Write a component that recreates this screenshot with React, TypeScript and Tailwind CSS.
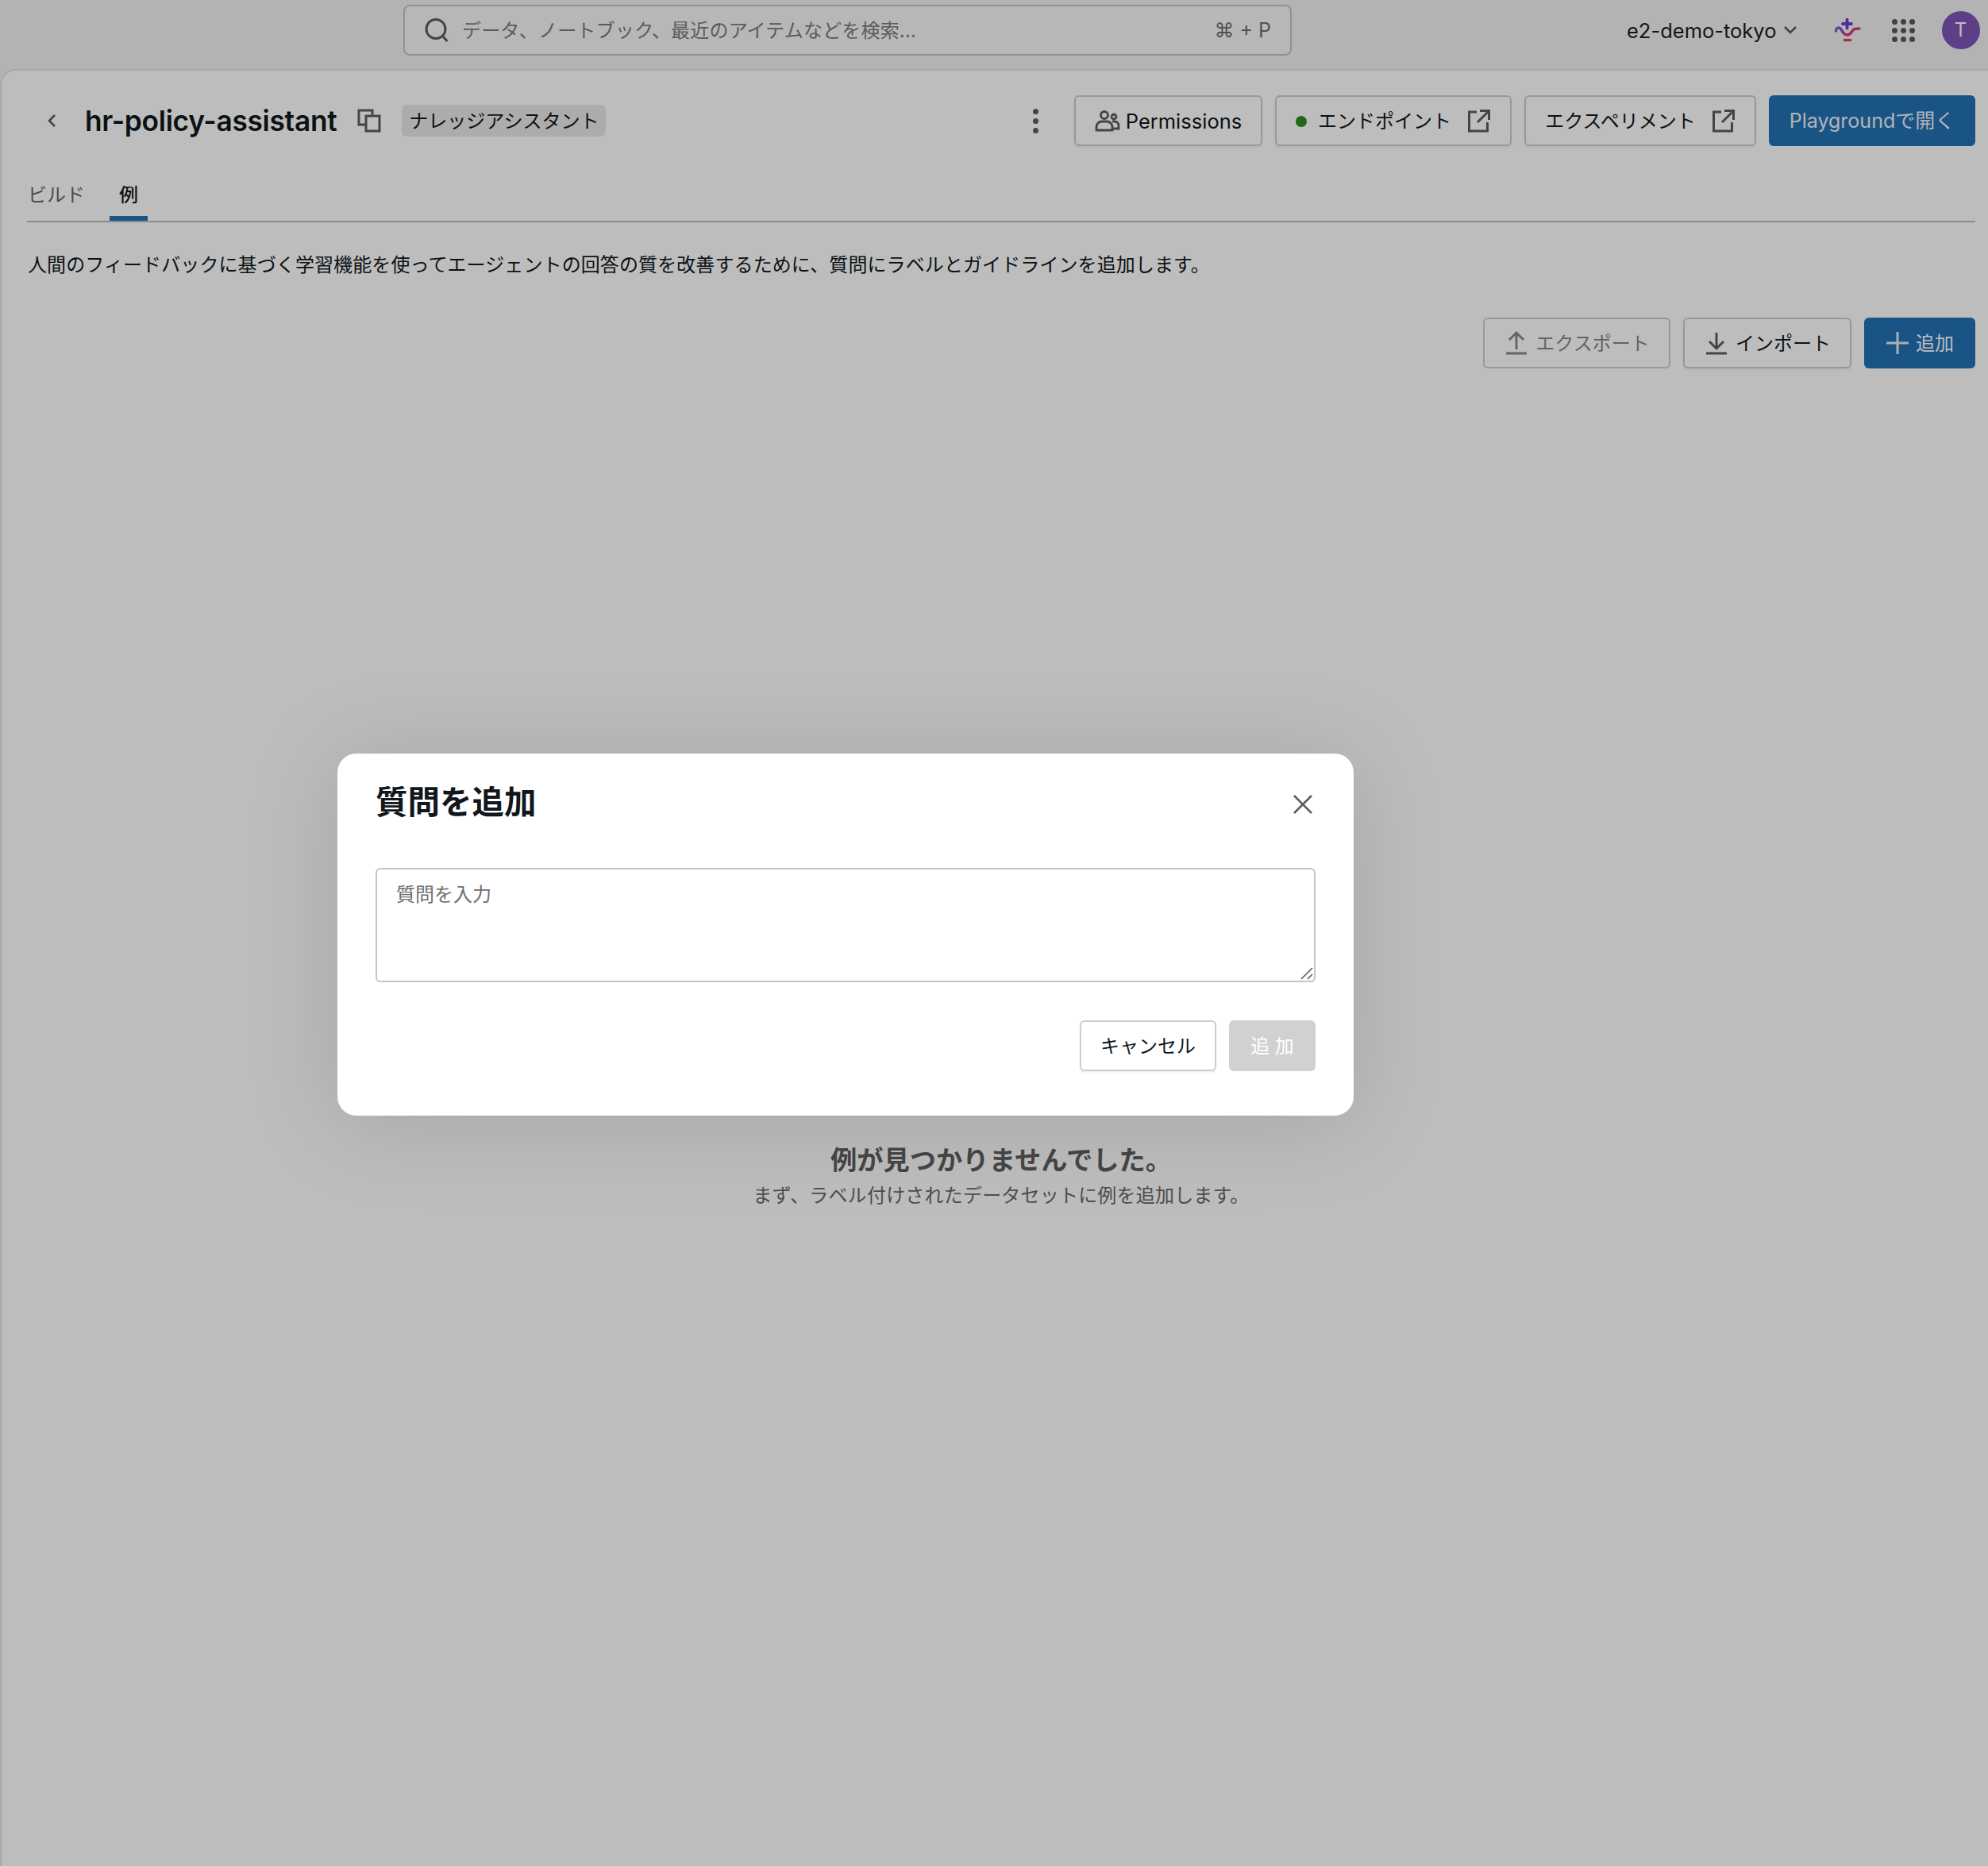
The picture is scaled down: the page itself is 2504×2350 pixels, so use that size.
import { useState } from "react";

const FONT = "font-['Inter','Noto_Sans_CJK_JP',sans-serif]";

function ExternalIcon() {
  return (
    <svg className="-mt-[2px]" width="30" height="30" viewBox="0 0 30 30" fill="none" stroke="#5c5c5c" strokeWidth="3">
      <path d="M12 4H2.500v24h23V17" />
      <path d="M16 2.500h11.500V14M27 3 13 17" />
    </svg>
  );
}

function Logo() {
  return (
    <svg width="34" height="30" viewBox="0 0 34 30" fill="none" strokeLinecap="round">
      <defs>
        <linearGradient id="lamp" x1="0" y1="0" x2="1" y2="0.4">
          <stop offset="0" stopColor="#4a72e0" />
          <stop offset="0.55" stopColor="#b8389f" />
          <stop offset="1" stopColor="#ee4058" />
        </linearGradient>
      </defs>
      <path d="M16.500 1.500v11M11 7h11" stroke="#6a3ed0" strokeWidth="3.800" />
      <path d="M2.500 16c0-3.500 2.500-5 5-3.500 3 2 3.500 8.500 9.500 8.500 5.500 0 5.500-7 9-7.500l6-.5" stroke="url(#lamp)" strokeWidth="3.400" />
      <path d="M12 27.500h10" stroke="#ea3c52" strokeWidth="3.200" strokeLinecap="butt" />
    </svg>
  );
}

function OutlineButton({ children, className }: { children: React.ReactNode; className: string }) {
  return (
    <button className={`flex h-[64px] shrink-0 items-center justify-center rounded-[6px] border-2 border-[#cdcdcd] bg-white pt-[2px] text-[24px] whitespace-nowrap text-[#11171c] shadow-[0_2px_3px_rgba(0,0,0,0.06)] ${className}`}>
      {children}
    </button>
  );
}

export default function App() {
  const [question, setQuestion] = useState("");

  return (
    <div className={`relative flex h-[2350px] w-[2504px] flex-col overflow-hidden bg-[#f2f2f2] text-[24px] text-[#11171c] ${FONT}`}>
      {/* top bar */}
      <div className="relative flex h-[87px] shrink-0 items-start pt-[6px] pl-[508px]">
        <div className="flex h-[64px] w-[1119px] items-center rounded-[8px] border-2 border-[#c4c4c4] bg-[#f7f7f7] pr-[24px] pl-[24px] text-[#7b7b7b]">
          <svg width="32" height="32" viewBox="0 0 32 32" fill="none" stroke="#5c5c5c" strokeWidth="3">
            <circle cx="15" cy="14.500" r="12" />
            <path d="m23.500 23.500 6 6.500" />
          </svg>
          <span className="ml-[16px] flex-1 pt-[2px] text-[24px] tracking-[0.18px]">データ、ノートブック、最近のアイテムなどを検索...</span>
          <span className="pt-[2px] text-[25px] text-[#6f6f6f]">⌘ + P</span>
        </div>
        <div className="ml-[422px] flex h-[64px] items-center">
          <span className="pt-[2px] text-[25.500px] text-[#1b1b1b]">e2-demo-tokyo</span>
          <svg className="ml-[8px]" width="18" height="12" viewBox="0 0 18 12" fill="none" stroke="#5c5c5c" strokeWidth="2.500">
            <path d="m2 2 7 7 7-7" />
          </svg>
          <div className="ml-[46px]">
            <Logo />
          </div>
          <div className="ml-[39px] grid grid-cols-3 gap-x-[4px] gap-y-[4px]">
            {[0, 1, 2, 3, 4, 5, 6, 7, 8].map((i) => (
              <span key={i} className="h-[7px] w-[7px] rounded-full bg-[#595959]" />
            ))}
          </div>
          <div className="ml-[34px] flex h-[48px] w-[48px] items-center justify-center rounded-full bg-[#7e56b6] text-[24px] text-white">T</div>
        </div>
      </div>

      {/* page panel */}
      <div className="flex flex-1 flex-col rounded-tl-[20px] border-t-2 border-l-2 border-[#e3e3e3] bg-white pr-[16px] pl-[32px]">
        <div className="mt-[31px] flex h-[64px] items-center">
          <svg className="ml-[25px] shrink-0" width="12" height="18" viewBox="0 0 12 18" fill="none" stroke="#5c5c5c" strokeWidth="2.600">
            <path d="M10 2 3 9l7 7" />
          </svg>
          <h1 className="ml-[36px] pt-[2px] text-[35.300px] font-semibold tracking-[-0.3px] whitespace-nowrap text-[#11171c]">hr-policy-assistant</h1>
          <svg className="ml-[26px] shrink-0" width="30" height="30" viewBox="0 0 30 30" fill="none" stroke="#5c5c5c" strokeWidth="3">
            <path d="M19 7.500V2H2v18h8" />
            <path d="M11 9h17v19H11z" />
          </svg>
          <span className="ml-[26px] flex h-[40px] items-center rounded-[6px] bg-[#e8e8e8] px-[9px] pt-[2px] text-[24px] whitespace-nowrap">ナレッジアシスタント</span>
          <div className="ml-auto flex flex-col gap-[5px]">
            <span className="h-[7px] w-[7px] rounded-full bg-[#5c5c5c]" />
            <span className="h-[7px] w-[7px] rounded-full bg-[#5c5c5c]" />
            <span className="h-[7px] w-[7px] rounded-full bg-[#5c5c5c]" />
          </div>
          <OutlineButton className="ml-[45px] w-[237px]">
            <svg className="-mt-[2px]" width="32" height="28" viewBox="0 0 32 28" fill="none" stroke="#5c5c5c" strokeWidth="2.800">
              <circle cx="12" cy="7" r="4.500" />
              <circle cx="24" cy="9" r="3" />
              <path d="M2 26v-4c0-4 3-7 7-7h6c4 0 7 3 7 7v4zM22 15h3c3 0 5 2 5 5v4h-8" />
            </svg>
            <span className="ml-[7px] text-[25.500px]">Permissions</span>
          </OutlineButton>
          <OutlineButton className="ml-[16px] w-[298px]">
            <span className="h-[14px] w-[14px] rounded-full bg-[#2f8a1f]" />
            <span className="mr-[20px] ml-[14px]">エンドポイント</span>
            <ExternalIcon />
          </OutlineButton>
          <OutlineButton className="ml-[16px] w-[292px]">
            <span className="mr-[20px]">エクスペリメント</span>
            <ExternalIcon />
          </OutlineButton>
          <button className="ml-[16px] h-[64px] w-[260px] shrink-0 rounded-[6px] bg-[#2272b4] pt-[2px] text-[25px] whitespace-nowrap text-[#eef3f8]">Playgroundで開く</button>
        </div>

        {/* tabs */}
        <div className="mt-[28px] flex h-[68px] items-start border-b-2 border-[#bcbcbc]">
          <span className="mt-[16px] ml-[1px] text-[#666666]">ビルド</span>
          <div className="ml-[31px] flex h-[66px] w-[48px] justify-center border-b-[6px] border-[#2272b4] pt-[16px] font-medium">例</div>
        </div>

        <p className="mt-[34px] ml-[1px] text-[24px] leading-[40px] tracking-[0.1px]">
          人間のフィードバックに基づく学習機能を使ってエージェントの回答の質を改善するために、質問にラベルとガイドラインを追加します。
        </p>

        {/* actions */}
        <div className="mt-[46px] flex justify-end gap-[16px]">
          <OutlineButton className="w-[236px] text-[#888888] shadow-none">
            <svg className="-mt-[2px]" width="32" height="32" viewBox="0 0 32 32" fill="none" stroke="#8a8a8a" strokeWidth="3">
              <path d="M3 29h26M16 24V4M7 12l9-9 9 9" />
            </svg>
            <span className="ml-[8px] text-[#888888]">エクスポート</span>
          </OutlineButton>
          <OutlineButton className="w-[212px]">
            <svg className="-mt-[2px]" width="32" height="32" viewBox="0 0 32 32" fill="none" stroke="#5c5c5c" strokeWidth="3">
              <path d="M3 29h26M16 3v20M7 14l9 9 9-9" />
            </svg>
            <span className="ml-[8px]">インポート</span>
          </OutlineButton>
          <button className="flex h-[64px] w-[140px] items-center justify-center rounded-[6px] bg-[#2272b4] text-white">
            <svg width="30" height="30" viewBox="0 0 30 30" fill="none" stroke="#e6eef6" strokeWidth="3">
              <path d="M1 15h28M15 1v28" />
            </svg>
            <span className="ml-[8px] pt-[2px]">追加</span>
          </button>
        </div>

        {/* empty state */}
        <div className="mt-[975px] flex flex-col items-center">
          <h2 className="text-[33.300px] leading-[44px] font-semibold text-[#5f5f5f]">例が見つかりませんでした。</h2>
          <p className="mt-[5px] text-[24px] leading-[36px] tracking-[0.2px] text-[#6a6a6a]">まず、ラベル付けされたデータセットに例を追加します。</p>
        </div>
      </div>

      {/* modal */}
      <div className="absolute inset-0 bg-[rgba(0,0,0,0.26)]" />
      <div className="absolute top-[949px] left-[425px] flex h-[456px] w-[1280px] flex-col rounded-[24px] bg-white px-[48px] pt-[32px] shadow-[0_8px_120px_rgba(0,0,0,0.13)]">
        <div className="flex h-[56px] items-center justify-between">
          <h2 className="pt-[4px] text-[40.500px] font-semibold text-[#11171c]">質問を追加</h2>
          <svg className="mt-[8px] mr-[2px]" width="28" height="28" viewBox="0 0 28 28" fill="none" stroke="#5c5c5c" strokeWidth="2.600">
            <path d="m3 3 22 22M25 3 3 25" />
          </svg>
        </div>
        <div className="relative mt-[56px] h-[144px] w-[1184px]">
          <textarea
            className="h-full w-full resize-none rounded-[6px] border-2 border-[#c4c4c4] px-[24px] pt-[16px] pb-[12px] text-[24px] leading-[32px] outline-none placeholder:text-[#6f6f6f]"
            placeholder="質問を入力"
            value={question}
            onChange={(e) => setQuestion(e.target.value)}
          />
          <svg className="pointer-events-none absolute right-[3px] bottom-[3px]" width="16" height="16" viewBox="0 0 16 16" fill="none" stroke="#5c5c5c" strokeWidth="1.600">
            <path d="M1 15 15 1M9 15l6-6" />
          </svg>
        </div>
        <div className="mt-[48px] flex justify-end gap-[16px]">
          <OutlineButton className="w-[172px]">キャンセル</OutlineButton>
          <button className="h-[64px] w-[109px] rounded-[6px] bg-[#d1d1d1] pt-[2px] text-[24px] text-white">追 加</button>
        </div>
      </div>
    </div>
  );
}
